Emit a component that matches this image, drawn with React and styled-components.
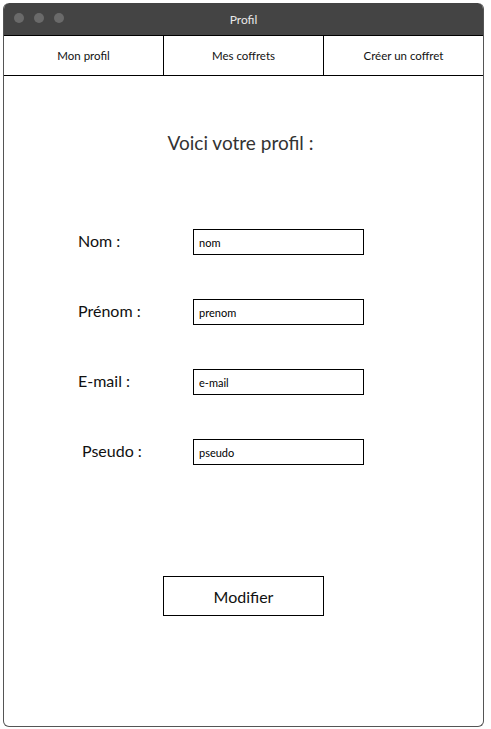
import React from "react";
import styled, { createGlobalStyle } from "styled-components";

const Global = createGlobalStyle`
  html, body { margin: 0; padding: 0; background: #fff; }
  body { padding: 3px; font-family: "Lato", "Open Sans", sans-serif; }
  * { box-sizing: border-box; }
`;

const Frame = styled.div`
  width: 481px;
  height: 724px;
  border: 1px solid #555;
  border-top: none;
  border-radius: 6px;
  display: flex;
  flex-direction: column;
  overflow: hidden;
  background: #fff;
`;

const TitleBar = styled.div`
  position: relative;
  height: 32px;
  margin: 0 -1px;
  background: #444;
  border-radius: 6px 6px 0 0;
  display: flex;
  align-items: center;
  justify-content: center;
  color: #e8e8e8;
  font-size: 12px;
`;

const Dots = styled.div`
  position: absolute;
  left: 11px;
  top: 10px;
  display: flex;
  gap: 10px;
`;

const Dot = styled.span`
  width: 10px;
  height: 10px;
  border-radius: 50%;
  background: #6a6a6a;
`;

const Tabs = styled.nav`
  display: grid;
  grid-template-columns: 159px 160px 1fr;
  height: 41px;
  margin: 0 -1px;
  border: 1px solid #000;
`;

const Tab = styled.div`
  display: flex;
  align-items: center;
  justify-content: center;
  font-size: 11.5px;
  color: #111;
  border-left: ${(p) => (p.$first ? "none" : "1px solid #000")};
`;

const Content = styled.main`
  flex: 1;
  display: flex;
  flex-direction: column;
  align-items: center;
  padding-top: 55px;
`;

const Heading = styled.h1`
  margin: 0 6px 0 0;
  font-size: 19px;
  font-weight: 400;
  color: #333;
  line-height: 24px;
`;

const Form = styled.div`
  align-self: flex-start;
  margin-top: 74px;
  margin-left: 74px;
  display: flex;
  flex-direction: column;
  gap: 44px;
`;

const Row = styled.div`
  display: grid;
  grid-template-columns: 115px 171px;
  align-items: center;
`;

const Label = styled.label`
  font-size: 16px;
  color: #111;
  padding-left: ${(p) => p.$indent || 0}px;
  margin-top: -3px;
`;

const Input = styled.input`
  height: 26px;
  width: 171px;
  border: 1px solid #000;
  padding: 0 5px;
  font-family: inherit;
  font-size: 11px;
  color: #000;
  outline: none;
  &::placeholder { color: #000; }
`;

const Button = styled.button`
  margin-top: 111px;
  width: 161px;
  height: 40px;
  border: 1px solid #000;
  background: #fff;
  font-family: inherit;
  font-size: 16px;
  color: #111;
`;

const fields = [
  { label: "Nom :", ph: "nom" },
  { label: "Prénom :", ph: "prenom" },
  { label: "E-mail :", ph: "e-mail" },
  { label: "Pseudo :", ph: "pseudo", indent: 4 },
];

export default function App() {
  return (
    <>
      <Global />
      <Frame>
        <TitleBar>
          <Dots>
            <Dot />
            <Dot />
            <Dot />
          </Dots>
          Profil
        </TitleBar>
        <Tabs>
          <Tab $first>Mon profil</Tab>
          <Tab>Mes coffrets</Tab>
          <Tab>Créer un coffret</Tab>
        </Tabs>
        <Content>
          <Heading>Voici votre profil :</Heading>
          <Form>
            {fields.map((f) => (
              <Row key={f.ph}>
                <Label $indent={f.indent}>{f.label}</Label>
                <Input placeholder={f.ph} />
              </Row>
            ))}
          </Form>
          <Button>Modifier</Button>
        </Content>
      </Frame>
    </>
  );
}
